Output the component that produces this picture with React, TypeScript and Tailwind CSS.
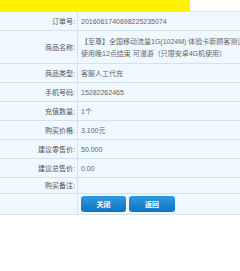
const rows: { label: string; value?: string; h: string }[] = [
  { label: "订单号:", value: "2016061740698225235074", h: "h-[19px]" },
  { label: "商品类型:", value: "客服人工代充", h: "h-[19px]" },
  { label: "手机号码:", value: "15282262465", h: "h-[19px]" },
  { label: "充值数量:", value: "1个", h: "h-[19px]" },
  { label: "购买价格:", value: "3.100元", h: "h-[19px]" },
  { label: "建议零售价:", value: "50.000", h: "h-[19px]" },
  { label: "建议总售价:", value: "0.00", h: "h-[19px]" },
  { label: "购买备注:", value: "", h: "h-[16px]" },
]

function Row({ label, h, children }: { label: string; h: string; children?: React.ReactNode }) {
  return (
    <div className={`flex ${h} border-b border-[#d3e2ec]`}>
      <div className="flex w-[78px] shrink-0 items-center justify-end border-r border-[#d3e2ec] pr-[2px] text-[#555]">
        {label}
      </div>
      <div className="flex min-w-0 flex-1 items-center pl-[3px] text-[#666]">{children}</div>
    </div>
  )
}

export default function App() {
  const [first, ...rest] = rows
  return (
    <div
      className="h-[271px] w-[240px] overflow-hidden bg-white text-[7px] leading-none"
      style={{ fontFamily: '"Liberation Sans", "Noto Sans CJK SC", sans-serif' }}
    >
      <div className="flex h-[11px]">
        <div className="w-[190px] bg-[#fff200]" />
      </div>
      <div className="border-t border-[#d3e2ec] bg-[#eef8fe]">
        <Row label={first.label} h="h-[19px]">
          {first.value}
        </Row>
        <Row label="商品名称:" h="h-[33px]">
          <div className="flex flex-col gap-[5px] whitespace-nowrap">
            <span>【至尊】全国移动流量1G(1024M) 体验卡新顾客测试</span>
            <span>使用晚12点结束 可漫游（只限安卓4G机使用）</span>
          </div>
        </Row>
        {rest.map((r) => (
          <Row key={r.label} label={r.label} h={r.h}>
            {r.value}
          </Row>
        ))}
        <Row label="" h="h-[21px]">
          <div className="flex gap-[3px]">
            <button className="flex h-[16px] w-[45px] items-center justify-center rounded-[3px] bg-gradient-to-b from-[#2e9be2] to-[#0c74c0] font-bold text-white">
              关闭
            </button>
            <button className="flex h-[16px] w-[46px] items-center justify-center rounded-[3px] bg-gradient-to-b from-[#2e9be2] to-[#0c74c0] font-bold text-white">
              返回
            </button>
          </div>
        </Row>
      </div>
    </div>
  )
}
